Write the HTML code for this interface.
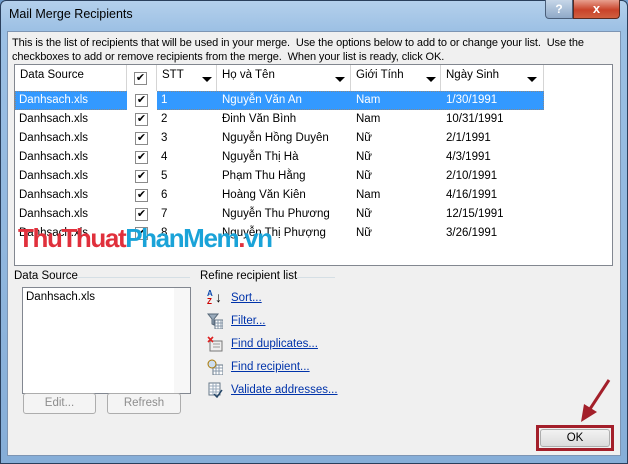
<!DOCTYPE html>
<html><head><meta charset="utf-8"><style>
*{margin:0;padding:0;box-sizing:border-box}
body{width:628px;height:464px;overflow:hidden;font-family:"Liberation Sans",sans-serif;font-size:11.5px;color:#000;background:#6f9ccc}
.win{position:absolute;left:0;top:0;width:628px;height:464px;background:linear-gradient(180deg,#b4d0ec 0,#9cc0e4 30px,#86aed8 100%);border:1px solid #2a3f5c;border-radius:6px 6px 0 0}
.title{position:absolute;left:9px;top:7px;font-size:12.5px;color:#000}
.help{position:absolute;left:545px;top:0;width:28px;height:19px;background:linear-gradient(#c6d6e8,#8fa9c8);border:1px solid #4b5f7a;border-top:none;border-radius:0 0 0 4px;color:#fff;font-weight:bold;text-align:center;font-size:12px;line-height:18px}
.close{position:absolute;left:573px;top:0;width:47px;height:19px;background:linear-gradient(#e8a08f,#c9432a 55%,#d06040);border:1px solid #5a2a20;border-top:none;border-radius:0 0 4px 0;color:#fff;font-weight:bold;text-align:center;font-size:13px;line-height:18px}
.client{position:absolute;left:7px;top:31px;width:614px;height:425px;background:#f0f0f0;border:1px solid #7d95b3}
.abs{position:absolute;white-space:nowrap}
.tbl{position:absolute;left:14px;top:64px;width:599px;height:202px;background:#fff;border:1px solid #828790}
.hd{position:absolute;top:65px;height:26px;border-right:1px solid #d5d5d5;line-height:20px;padding-left:5px;background:#fff}
.row{position:absolute;left:15px;width:529px;height:19px;line-height:19px}
.row span{position:absolute;top:0}
.sel{background:#3399ff;color:#fff}
.cb{position:absolute;width:13px;height:13px;border:1px solid #8a8a8a;background:#fff;font-size:11px;line-height:11px;text-align:center;color:#000}
.arr{position:absolute;width:0;height:0;border-left:5px solid transparent;border-right:5px solid transparent;border-top:5px solid #000}
.link{color:#0033aa;text-decoration:underline}
.btn{position:absolute;border:1px solid #adadad;border-radius:3px;background:#f4f4f4;color:#8d8d8d;text-align:center;line-height:18px}
.ico{position:absolute;width:16px;height:16px}
</style></head><body>
<div class="win"></div>
<div class="title">Mail Merge Recipients</div>
<div class="help">?</div>
<div class="close">x</div>
<div class="client"></div>
<div class="abs" style="left:12px;top:37px;line-height:13.5px;font-size:11px;letter-spacing:-0.1px">This is the list of recipients that will be used in your merge.&nbsp; Use the options below to add to or change your list.&nbsp; Use the<br>checkboxes to add or remove recipients from the merge.&nbsp; When your list is ready, click OK.</div>
<div class="tbl"></div>
<div class="hd" style="left:15px;width:112px">Data Source</div>
<div class="hd" style="left:127px;width:30px"></div>
<div class="cb" style="left:134px;top:72px">✔</div>
<div class="hd" style="left:157px;width:60px">STT</div><div class="arr" style="left:202px;top:77px"></div>
<div class="hd" style="left:217px;width:134px">Họ và Tên</div><div class="arr" style="left:335px;top:77px"></div>
<div class="hd" style="left:351px;width:90px">Giới Tính</div><div class="arr" style="left:426px;top:77px"></div>
<div class="hd" style="left:441px;width:103px">Ngày Sinh</div><div class="arr" style="left:527px;top:77px"></div>

<div class="row sel" style="top:91px;border:1px dotted #888"></div>
<div class="abs" style="left:127px;top:91px;width:30px;height:19px;background:#fff"></div>

<div class="row" style="top:91px;color:#fff"><span style="left:4px">Danhsach.xls</span><span style="left:146px">1</span><span style="left:207px">Nguyễn Văn An</span><span style="left:341px">Nam</span><span style="left:431px">1/30/1991</span></div>
<div class="row" style="top:110px"><span style="left:4px">Danhsach.xls</span><span style="left:146px">2</span><span style="left:207px">Đinh Văn Bình</span><span style="left:341px">Nam</span><span style="left:431px">10/31/1991</span></div>
<div class="row" style="top:129px"><span style="left:4px">Danhsach.xls</span><span style="left:146px">3</span><span style="left:207px">Nguyễn Hồng Duyên</span><span style="left:341px">Nữ</span><span style="left:431px">2/1/1991</span></div>
<div class="row" style="top:148px"><span style="left:4px">Danhsach.xls</span><span style="left:146px">4</span><span style="left:207px">Nguyễn Thị Hà</span><span style="left:341px">Nữ</span><span style="left:431px">4/3/1991</span></div>
<div class="row" style="top:167px"><span style="left:4px">Danhsach.xls</span><span style="left:146px">5</span><span style="left:207px">Phạm Thu Hằng</span><span style="left:341px">Nữ</span><span style="left:431px">2/10/1991</span></div>
<div class="row" style="top:186px"><span style="left:4px">Danhsach.xls</span><span style="left:146px">6</span><span style="left:207px">Hoàng Văn Kiên</span><span style="left:341px">Nam</span><span style="left:431px">4/16/1991</span></div>
<div class="row" style="top:205px"><span style="left:4px">Danhsach.xls</span><span style="left:146px">7</span><span style="left:207px">Nguyễn Thu Phương</span><span style="left:341px">Nữ</span><span style="left:431px">12/15/1991</span></div>
<div class="row" style="top:224px"><span style="left:4px">Danhsach.xls</span><span style="left:146px">8</span><span style="left:207px">Nguyễn Thị Phượng</span><span style="left:341px">Nữ</span><span style="left:431px">3/26/1991</span></div>

<div class="cb" style="left:135px;top:94px">✔</div>
<div class="cb" style="left:135px;top:113px">✔</div>
<div class="cb" style="left:135px;top:132px">✔</div>
<div class="cb" style="left:135px;top:151px">✔</div>
<div class="cb" style="left:135px;top:170px">✔</div>
<div class="cb" style="left:135px;top:189px">✔</div>
<div class="cb" style="left:135px;top:208px">✔</div>
<div class="cb" style="left:135px;top:227px">✔</div>

<div class="abs" style="left:18px;top:225px;font-size:26px;font-weight:bold;letter-spacing:-1.4px;line-height:26px"><span style="color:#e0303c">ThuThuat</span><span style="color:#1aa3d8">PhanMem</span><span style="color:#e0303c">.</span><span style="color:#1aa3d8">vn</span></div>

<div class="abs" style="left:14px;top:270px">Data Source</div>
<div class="abs" style="left:77px;top:277px;width:113px;height:1px;background:#d5dfe5"></div>
<div class="abs" style="left:200px;top:270px">Refine recipient list</div>
<div class="abs" style="left:297px;top:277px;width:38px;height:1px;background:#d5dfe5"></div>
<div class="abs" style="left:22px;top:287px;width:169px;height:107px;background:#fff;border:1px solid #828790"></div>
<div class="abs" style="left:174px;top:288px;width:16px;height:105px;background:#f7f7f7"></div>
<div class="abs" style="left:26px;top:291px">Danhsach.xls</div>
<div class="btn" style="left:23px;top:393px;width:73px;height:21px">Edit...</div>
<div class="btn" style="left:107px;top:393px;width:74px;height:21px">Refresh</div>

<div class="abs" style="left:207px;top:290px;font-size:8px;line-height:8px;color:#0645ad;font-weight:bold">A<br><span style="color:#c00">Z</span></div>
<div class="abs" style="left:215px;top:289px;font-size:14px">↓</div>
<svg class="ico" style="left:207px;top:313px" viewBox="0 0 16 16"><path d="M1 1h10l-4 5v6l-2-1V6z" fill="#9ab" stroke="#567"/><rect x="8" y="7" width="8" height="9" fill="#fff" stroke="#678"/><path d="M8 10h8M8 13h8M11 7v9M14 7v9" stroke="#89a"/></svg>
<svg class="ico" style="left:207px;top:336px" viewBox="0 0 16 16"><rect x="3" y="5" width="12" height="10" fill="#eee" stroke="#777"/><path d="M1 1l5 5M6 1L1 6" stroke="#d22" stroke-width="1.6"/><path d="M6 8h7M6 11h7" stroke="#999"/></svg>
<svg class="ico" style="left:207px;top:359px" viewBox="0 0 16 16"><rect x="6" y="6" width="10" height="10" fill="#fff" stroke="#678"/><path d="M6 9h10M6 12h10M9 6v10M12 6v10" stroke="#89a"/><circle cx="5" cy="5" r="4" fill="#cde" stroke="#a70"/></svg>
<svg class="ico" style="left:207px;top:382px" viewBox="0 0 16 16"><rect x="2" y="1" width="11" height="12" fill="#fff" stroke="#678"/><path d="M2 4h11M2 7h11M2 10h11M6 1v12M9 1v12" stroke="#9ab"/><path d="M7 12l3 3 5-7" stroke="#246" stroke-width="1.5" fill="none"/></svg>
<div class="abs link" style="left:231px;top:292px">Sort...</div>
<div class="abs link" style="left:231px;top:315px">Filter...</div>
<div class="abs link" style="left:231px;top:338px">Find duplicates...</div>
<div class="abs link" style="left:231px;top:361px">Find recipient...</div>
<div class="abs link" style="left:231px;top:384px">Validate addresses...</div>

<div class="abs" style="left:536px;top:425px;width:78px;height:26px;border:3px solid #a31f2a"></div>
<div class="btn" style="left:540px;top:429px;width:70px;height:18px;color:#000;line-height:16px;background:linear-gradient(#f2f2f2,#dcdcdc)">OK</div>
<svg class="abs" style="left:570px;top:376px" width="45" height="48" viewBox="0 0 45 48"><path d="M39 4L18 36" stroke="#a31f2a" stroke-width="3"/><path d="M11 46L14 28L27 36z" fill="#a31f2a"/></svg>
</body></html>
